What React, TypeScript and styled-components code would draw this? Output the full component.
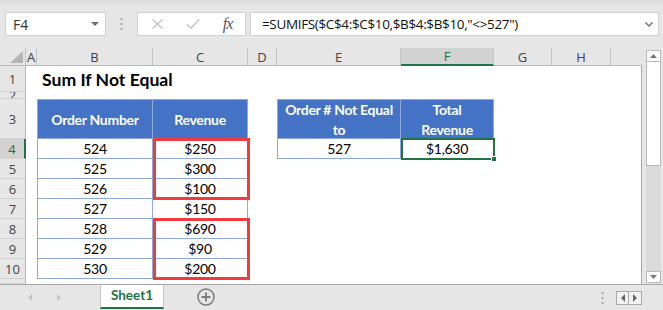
import React from "react";
import styled, { createGlobalStyle } from "styled-components";

const GREEN = "#217346";
const HEAD_BG = "#e6e6e6";
const BLUE = "#4472c4";
const BLUE_LINE = "#8ea9db";
const RED = "#ef3b3f";

const GlobalStyle = createGlobalStyle`
  html, body { margin: 0; padding: 0; background: #fff; }
  body { width: 663px; height: 310px; overflow: hidden; font-family: "Lato", sans-serif; }
  * { box-sizing: border-box; }
`;

const Window = styled.div`
  width: 663px;
  height: 310px;
  display: flex;
  flex-direction: column;
  background: ${HEAD_BG};
`;

/* ---------- formula bar ---------- */
const FormulaBar = styled.div`
  height: 48px;
  flex: none;
  display: flex;
  align-items: flex-start;
  padding: 12px 4px 0 5px;
  background: linear-gradient(#dcdcdc 0px, ${HEAD_BG} 6px);
`;

const NameBox = styled.div`
  width: 101px;
  height: 24px;
  background: #fff;
  border: 1px solid #d0d0d0;
  display: flex;
  align-items: center;
  justify-content: space-between;
  padding: 0 6px 0 7px;
  font-family: "Open Sans", sans-serif;
  font-size: 14px;
  color: #333;
`;

const Grip = styled.div`
  width: 31px;
  height: 24px;
  display: flex;
  align-items: center;
  justify-content: center;
`;

const FxBox = styled.div`
  width: 109px;
  height: 24px;
  background: #fff;
  border: 1px solid #d0d0d0;
  display: flex;
  align-items: center;
  padding-left: 2px;
`;

const FxSlot = styled.div`
  width: 35px;
  height: 22px;
  display: flex;
  align-items: center;
  justify-content: center;
`;

const FxText = styled.span`
  font-family: "Liberation Serif", serif;
  font-style: italic;
  font-size: 16px;
  color: #555;
  letter-spacing: -1px;
`;

const FormulaInput = styled.div`
  margin-left: 4px;
  width: 409px;
  height: 24px;
  background: #fff;
  border: 1px solid #d0d0d0;
  display: flex;
  align-items: center;
  justify-content: space-between;
  padding: 0 5px 0 11px;
  font-family: "Open Sans", sans-serif;
  font-size: 13.5px;
  letter-spacing: -0.35px;
  color: #111;
  white-space: nowrap;
`;

/* ---------- sheet ---------- */
const SheetRow = styled.div`
  height: 236px;
  flex: none;
  display: flex;
`;

const Grid = styled.div`
  width: 642px;
  height: 236px;
  display: grid;
  grid-template-columns: 26px 11px 116px 95px 29px 124px 93px 58px 59px 31px;
  grid-template-rows: 18px 26px 7px 40px repeat(7, 20px) 5px;
  background: #fff;
  overflow: hidden;
`;

const Corner = styled.div`
  grid-column: 1;
  grid-row: 1;
  background: ${HEAD_BG};
  border-right: 1px solid #c4c4c4;
  border-bottom: 1px solid #b8b8b8;
  display: flex;
  align-items: flex-end;
  justify-content: flex-end;
  padding: 0 2px 2px 0;
`;

const ColHeader = styled.div<{ $col: number; $active?: boolean; $last?: boolean }>`
  grid-column: ${(p) => p.$col};
  grid-row: 1;
  background: ${(p) => (p.$active ? "#d2d2d2" : HEAD_BG)};
  border-right: ${(p) => (p.$last ? "none" : "1px solid #c4c4c4")};
  border-bottom: ${(p) => (p.$active ? `2px solid ${GREEN}` : "1px solid #b8b8b8")};
  display: flex;
  align-items: center;
  justify-content: center;
  font-family: "Open Sans", sans-serif;
  font-size: 13px;
  color: ${(p) => (p.$active ? GREEN : "#444")};
`;

const RowHeader = styled.div<{ $row: number; $active?: boolean }>`
  grid-column: 1;
  grid-row: ${(p) => p.$row};
  background: ${(p) => (p.$active ? "#d2d2d2" : HEAD_BG)};
  border-bottom: 1px solid #d2d2d2;
  border-right: ${(p) => (p.$active ? `2px solid ${GREEN}` : "1px solid #b8b8b8")};
  display: flex;
  align-items: center;
  justify-content: center;
  overflow: hidden;
  font-family: "Open Sans", sans-serif;
  font-size: 13px;
  line-height: 16px;
  color: ${(p) => (p.$active ? GREEN : "#444")};
`;

const RightEdge = styled.div`
  grid-column: 10;
  grid-row: 2 / -1;
  border-right: 1px solid #a6a6a6;
`;

const Title = styled.div`
  grid-column: 3 / span 3;
  grid-row: 2;
  display: flex;
  align-items: center;
  padding-left: 5px;
  padding-top: 1px;
  font-family: "Lato", sans-serif;
  font-weight: 700;
  font-size: 17.6px;
  color: #000;
  white-space: nowrap;
`;

const Cell = styled.div<{ $col: number; $row: number; $head?: boolean; $left?: boolean; $top?: boolean }>`
  grid-column: ${(p) => p.$col};
  grid-row: ${(p) => p.$row};
  display: flex;
  align-items: center;
  justify-content: center;
  text-align: center;
  font-family: "Lato", sans-serif;
  font-size: 14px;
  letter-spacing: -0.3px;
  line-height: 20px;
  font-weight: ${(p) => (p.$head ? 700 : 400)};
  color: ${(p) => (p.$head ? "#fff" : "#000")};
  background: ${(p) => (p.$head ? BLUE : "#fff")};
  border-right: 1px solid ${BLUE_LINE};
  border-bottom: 1px solid ${BLUE_LINE};
  border-left: ${(p) => (p.$left ? `1px solid ${BLUE_LINE}` : "none")};
  border-top: ${(p) => (p.$top ? `1px solid ${BLUE_LINE}` : "none")};
  padding-top: 1px;
`;

const RedBox = styled.div<{ $row: number }>`
  grid-column: 4;
  grid-row: ${(p) => p.$row} / span 3;
  margin: -1px -2px -1px 0;
  border: 3px solid ${RED};
  z-index: 2;
  pointer-events: none;
`;

const Selection = styled.div`
  grid-column: 7;
  grid-row: 5;
  margin: -1px -1px -1px 0;
  border: 2px solid ${GREEN};
  position: relative;
  z-index: 2;
`;

const FillHandle = styled.div`
  position: absolute;
  right: -4px;
  bottom: -4px;
  width: 6px;
  height: 6px;
  background: ${GREEN};
  border: 1px solid #fff;
`;

/* ---------- vertical scrollbar ---------- */
const VScroll = styled.div`
  width: 21px;
  display: flex;
  flex-direction: column;
  padding: 2px 2px 1px 4px;
  background: ${HEAD_BG};
`;

const ScrollButton = styled.div`
  height: 12px;
  flex: none;
  background: #fff;
  border: 1px solid #b9b9b9;
  display: flex;
  align-items: center;
  justify-content: center;
`;

const Thumb = styled.div`
  height: 104px;
  flex: none;
  background: #fff;
  border: 1px solid #b9b9b9;
  border-top: none;
`;

const Track = styled.div`
  flex: 1;
  background: #dadada;
`;

/* ---------- tab bar ---------- */
const TabBar = styled.div`
  height: 26px;
  flex: none;
  display: flex;
  align-items: stretch;
  border-top: 1px solid #a6a6a6;
  background: ${HEAD_BG};
`;

const NavArrow = styled.div`
  width: 29px;
  display: flex;
  align-items: center;
  justify-content: center;
`;

const NavGroup = styled.div`
  width: 100px;
  display: flex;
  padding-left: 15px;
`;

const SheetTab = styled.div`
  width: 64px;
  margin-bottom: 1px;
  background: #fff;
  border-left: 1px solid #c6c6c6;
  border-right: 1px solid #c6c6c6;
  border-bottom: 2px solid ${GREEN};
  display: flex;
  align-items: center;
  justify-content: center;
  font-family: "Lato", sans-serif;
  font-weight: 700;
  font-size: 13.5px;
  color: ${GREEN};
  padding-bottom: 2px;
`;

const AddButton = styled.div`
  width: 84px;
  display: flex;
  align-items: center;
  justify-content: center;
  padding-bottom: 2px;
`;

const Spacer = styled.div`
  flex: 1;
`;

const DotsBox = styled.div`
  width: 14px;
  display: flex;
  align-items: center;
  justify-content: center;
  margin-right: 7px;
`;

const ScrollNav = styled.div`
  display: flex;
  align-items: center;
  margin-right: 21px;
`;

const NavBtn = styled.div`
  width: 13px;
  height: 14px;
  border: 1px solid #a9a9a9;
  background: #f2f2f2;
  display: flex;
  align-items: center;
  justify-content: center;
  & + & {
    border-left: none;
  }
`;

const cols = ["A", "B", "C", "D", "E", "F", "G", "H", ""];
const orders = ["524", "525", "526", "527", "528", "529", "530"];
const revenue = ["$250", "$300", "$100", "$150", "$690", "$90", "$200"];

const Tri = ({ dir, color, w = 7, h = 4 }: { dir: "up" | "down" | "left" | "right"; color: string; w?: number; h?: number }) => {
  const pts =
    dir === "down"
      ? `0,0 ${w},0 ${w / 2},${h}`
      : dir === "up"
      ? `0,${h} ${w},${h} ${w / 2},0`
      : dir === "left"
      ? `${h},0 ${h},${w} 0,${w / 2}`
      : `0,0 0,${w} ${h},${w / 2}`;
  const vw = dir === "down" || dir === "up" ? w : h;
  const vh = dir === "down" || dir === "up" ? h : w;
  return (
    <svg width={vw} height={vh} viewBox={`0 0 ${vw} ${vh}`}>
      <polygon points={pts} fill={color} />
    </svg>
  );
};

export default function App() {
  return (
    <>
      <GlobalStyle />
      <Window>
        <FormulaBar>
          <NameBox>
            <span>F4</span>
            <Tri dir="down" color="#6e6e6e" w={8} h={4} />
          </NameBox>
          <Grip>
            <svg width="3" height="12" viewBox="0 0 3 12">
              <rect x="0.5" y="0" width="2" height="2" fill="#a8a8a8" />
              <rect x="0.5" y="5" width="2" height="2" fill="#a8a8a8" />
              <rect x="0.5" y="10" width="2" height="2" fill="#a8a8a8" />
            </svg>
          </Grip>
          <FxBox>
            <FxSlot>
              <svg width="11" height="10" viewBox="0 0 11 10">
                <path d="M0.5 0.5 L10.5 9.5 M10.5 0.5 L0.5 9.5" stroke="#c2c2c2" strokeWidth="1.3" fill="none" />
              </svg>
            </FxSlot>
            <FxSlot>
              <svg width="14" height="10" viewBox="0 0 14 10">
                <path d="M0.7 5.2 L5 9.2 L13.3 0.6" stroke="#c2c2c2" strokeWidth="1.4" fill="none" />
              </svg>
            </FxSlot>
            <FxSlot>
              <FxText>fx</FxText>
            </FxSlot>
          </FxBox>
          <FormulaInput>
            <span>=SUMIFS($C$4:$C$10,$B$4:$B$10,"&lt;&gt;527")</span>
            <svg width="8" height="5" viewBox="0 0 8 5">
              <path d="M0.5 0.5 L4 4 L7.5 0.5" stroke="#777" strokeWidth="1.5" fill="none" />
            </svg>
          </FormulaInput>
        </FormulaBar>

        <SheetRow>
          <Grid>
            <Corner>
              <svg width="13" height="12" viewBox="0 0 13 12">
                <polygon points="13,0 13,12 0,12" fill="#b5b5b5" />
              </svg>
            </Corner>
            {cols.map((c, i) => (
              <ColHeader key={i} $col={i + 2} $active={c === "F"} $last={i === cols.length - 1}>
                {c}
              </ColHeader>
            ))}
            {[1, 2, 3, 4, 5, 6, 7, 8, 9, 10, 11].map((r) => (
              <RowHeader key={r} $row={r + 1} $active={r === 4}>
                {r === 11 ? "" : r}
              </RowHeader>
            ))}
            <RightEdge />

            <Title>Sum If Not Equal</Title>

            <Cell $col={3} $row={4} $head $left $top>Order Number</Cell>
            <Cell $col={4} $row={4} $head $top>Revenue</Cell>
            {orders.map((o, i) => (
              <React.Fragment key={o}>
                <Cell $col={3} $row={i + 5} $left>{o}</Cell>
                <Cell $col={4} $row={i + 5}>{revenue[i]}</Cell>
              </React.Fragment>
            ))}

            <Cell $col={6} $row={4} $head $left $top>Order # Not Equal<br />to</Cell>
            <Cell $col={7} $row={4} $head $top>Total<br />Revenue</Cell>
            <Cell $col={6} $row={5} $left>527</Cell>
            <Cell $col={7} $row={5}>$1,630</Cell>

            <RedBox $row={5} />
            <RedBox $row={9} />
            <Selection>
              <FillHandle />
            </Selection>
          </Grid>
          <VScroll>
            <ScrollButton>
              <Tri dir="up" color="#777" w={7} h={4} />
            </ScrollButton>
            <Thumb />
            <Track />
            <ScrollButton>
              <Tri dir="down" color="#777" w={7} h={4} />
            </ScrollButton>
          </VScroll>
        </SheetRow>

        <TabBar>
          <NavGroup>
            <NavArrow>
              <Tri dir="left" color="#c4c4c4" w={7} h={4} />
            </NavArrow>
            <NavArrow>
              <Tri dir="right" color="#c4c4c4" w={7} h={4} />
            </NavArrow>
          </NavGroup>
          <SheetTab>Sheet1</SheetTab>
          <AddButton>
            <svg width="18" height="18" viewBox="0 0 18 18">
              <circle cx="9" cy="9" r="8" stroke="#7b7b7b" strokeWidth="1.5" fill="none" />
              <path d="M9 4.5 V13.5 M4.5 9 H13.5" stroke="#7b7b7b" strokeWidth="1.8" />
            </svg>
          </AddButton>
          <Spacer />
          <DotsBox>
            <svg width="3" height="12" viewBox="0 0 3 12">
              <rect x="0.5" y="0" width="2" height="2" fill="#a8a8a8" />
              <rect x="0.5" y="5" width="2" height="2" fill="#a8a8a8" />
              <rect x="0.5" y="10" width="2" height="2" fill="#a8a8a8" />
            </svg>
          </DotsBox>
          <ScrollNav>
            <NavBtn>
              <Tri dir="left" color="#666" w={8} h={4} />
            </NavBtn>
            <NavBtn>
              <Tri dir="right" color="#666" w={8} h={4} />
            </NavBtn>
          </ScrollNav>
        </TabBar>
      </Window>
    </>
  );
}
